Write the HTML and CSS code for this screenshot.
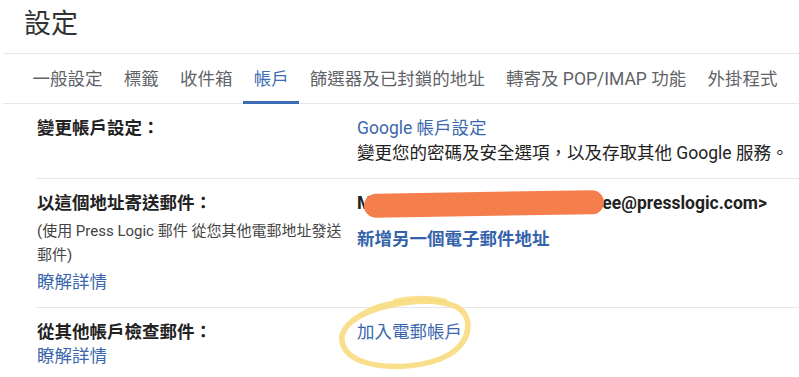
FILE: index.html
```html
<!DOCTYPE html>
<html lang="zh-Hant">
<head>
<meta charset="utf-8">
<title>設定</title>
<link rel="stylesheet" href="styles.css">
</head>
<body>
<div class="page">
  <h1 class="title">設定</h1>
  <nav class="tabs">
    <span class="tab">一般設定</span>
    <span class="tab">標籤</span>
    <span class="tab">收件箱</span>
    <span class="tab active">帳戶</span>
    <span class="tab">篩選器及已封鎖的地址</span>
    <span class="tab">轉寄及 POP/IMAP 功能</span>
    <span class="tab">外掛程式</span>
  </nav>
  <div class="rows">
    <div class="row">
      <div class="label">
        <div class="label-title">變更帳戶設定：</div>
      </div>
      <div class="value">
        <a class="link">Google 帳戶設定</a>
        <div class="desc">變更您的密碼及安全選項，以及存取其他 Google 服務。</div>
      </div>
    </div>
    <div class="row">
      <div class="label">
        <div class="label-title">以這個地址寄送郵件：</div>
        <div class="note">(使用 Press Logic 郵件 從您其他電郵地址發送郵件)</div>
        <a class="link more">瞭解詳情</a>
      </div>
      <div class="value">
        <div class="email">M<span class="redact"></span>ee@presslogic.com&gt;</div>
        <a class="link strong add">新增另一個電子郵件地址</a>
      </div>
    </div>
    <div class="row">
      <div class="label">
        <div class="label-title">從其他帳戶檢查郵件：</div>
        <a class="link more tight">瞭解詳情</a>
      </div>
      <div class="value marked">
        <a class="link">加入電郵帳戶</a>
        <svg class="circle" width="140" height="80" viewBox="0 0 140 80" aria-hidden="true">
          <path d="M30 22 C50 9 100 4 124 15 C140 24 139 48 117 62 C96 75 56 78 31 70 C9 63 3 46 15 33 C28 19 60 9 96 9 C104 9 110 10 116 12" fill="none" stroke="#f8dc7e" stroke-width="5.5" stroke-linecap="round" opacity="0.9"/>
          <path d="M62 9 C80 5 96 5 112 9" fill="none" stroke="#f8dc7e" stroke-width="4.5" stroke-linecap="round" opacity="0.85"/>
        </svg>
      </div>
    </div>
  </div>
</div>
</body>
</html>
```
FILE: styles.css
```css
html, body {
  margin: 0;
  padding: 0;
  background: #ffffff;
}
body {
  font-family: Roboto, "Noto Sans CJK TC", sans-serif;
  font-size: 17.5px;
  color: #222222;
  overflow: hidden;
}
.page {
  padding-left: 3px;
}
.title {
  margin: 0;
  height: 53px;
  padding-left: 21px;
  font-size: 27px;
  font-weight: 400;
  line-height: 49px;
  color: #333333;
  border-bottom: 1px solid #e6e6e6;
  box-sizing: content-box;
}
.tabs {
  display: flex;
  height: 49px;
  padding-left: 19px;
  border-bottom: 1px solid #e6e6e6;
}
.tab {
  box-sizing: border-box;
  height: 50px;
  margin-bottom: -1px;
  padding: 3px 10.6px 0;
  line-height: 44px;
  border-bottom: 3px solid transparent;
  color: #5f6368;
  white-space: nowrap;
}
.tab.active {
  color: #3f6db3;
  border-bottom-color: #3c6db4;
}
.rows {
  margin-left: 33px;
}
.row {
  display: flex;
  padding: 12px 0;
  border-bottom: 1px solid #e6e6e6;
}
.label {
  box-sizing: border-box;
  width: 321px;
  flex: none;
  padding: 0 7px 0 1px;
}
.label-title {
  font-weight: 700;
  line-height: 25px;
  color: #222222;
}
.note {
  margin-top: 3px;
  font-size: 15px;
  line-height: 24px;
  color: #444444;
}
.link {
  display: block;
  color: #3b67ae;
  line-height: 25px;
  cursor: pointer;
}
.more {
  margin-top: 3px;
}
.more.tight {
  margin-top: 0;
  line-height: 23px;
}
.strong {
  font-weight: 700;
  color: #3463ab;
}
.add {
  margin-top: 11px;
}
.value {
  flex: 1;
  min-width: 0;
}
.desc {
  line-height: 25px;
  white-space: nowrap;
}
.email {
  font-weight: 700;
  line-height: 25px;
  white-space: nowrap;
}
.redact {
  display: inline-block;
  width: 240px;
  height: 24px;
  margin: 0 -2px 0 -8px;
  border-radius: 12px;
  background: #f47f4c;
  vertical-align: -7px;
  transform: rotate(-0.9deg);
}
.marked {
  position: relative;
}
.circle {
  position: absolute;
  left: -24px;
  top: -28px;
  pointer-events: none;
}
```
